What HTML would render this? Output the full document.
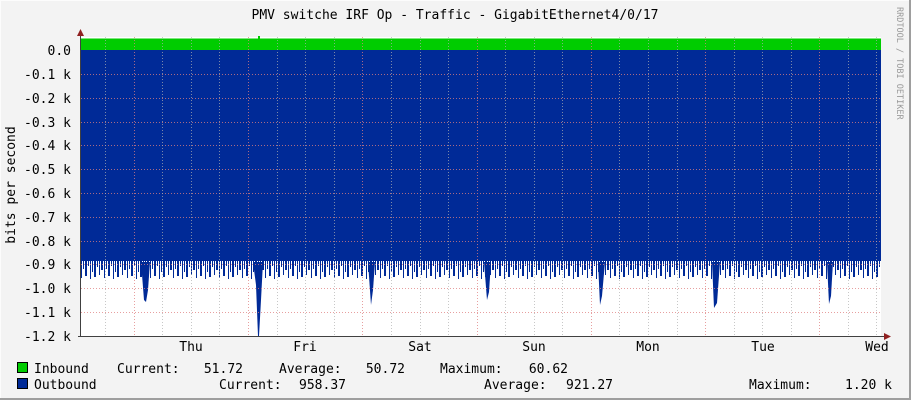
<!DOCTYPE html>
<html><head><meta charset="utf-8"><style>
html,body{margin:0;padding:0;background:#f3f3f3;}
svg{display:block;}
text{font-family:"DejaVu Sans Mono","Liberation Mono",monospace;font-size:13px;fill:#000;}
</style></head><body>
<svg width="911" height="400" viewBox="0 0 911 400" xmlns="http://www.w3.org/2000/svg">
<defs>
<pattern id="sp" patternUnits="userSpaceOnUse" x="81" y="258" width="23" height="30">
<rect x="0" y="0" width="23" height="3" fill="#002a97"/>
<rect x="0" y="0" width="1" height="20" fill="#002a97"/>
<rect x="2" y="0" width="1" height="11" fill="#002a97"/>
<rect x="4" y="0" width="2" height="18" fill="#002a97"/>
<rect x="7" y="0" width="1" height="8" fill="#002a97"/>
<rect x="9" y="0" width="1" height="21" fill="#002a97"/>
<rect x="11" y="0" width="1" height="14" fill="#002a97"/>
<rect x="13" y="0" width="2" height="19" fill="#002a97"/>
<rect x="16" y="0" width="1" height="9" fill="#002a97"/>
<rect x="18" y="0" width="1" height="17" fill="#002a97"/>
<rect x="20" y="0" width="2" height="12" fill="#002a97"/>
</pattern>
</defs>
<rect x="0" y="0" width="911" height="400" fill="#f3f3f3"/>
<rect x="0" y="0" width="911" height="1" fill="#fcfcfc"/>
<rect x="0" y="0" width="1" height="400" fill="#fcfcfc"/>
<rect x="909" y="0" width="2" height="400" fill="#9e9e9e"/>
<rect x="0" y="398" width="911" height="2" fill="#9e9e9e"/>
<text x="455" y="19" text-anchor="middle">PMV switche IRF Op - Traffic - GigabitEthernet4/0/17</text>
<rect x="81" y="37" width="800" height="299" fill="#fff"/>
<rect x="81" y="39" width="800" height="11" fill="#00cc00"/>
<rect x="81" y="38" width="800" height="1" fill="#00cc00" opacity="0.5"/>
<rect x="258" y="36" width="2" height="3" fill="#00cc00"/>
<rect x="81" y="50" width="800" height="208" fill="#002a97"/>
<rect x="81" y="258" width="800" height="22" fill="url(#sp)"/>
<g fill="#002a97">
<polygon points="141,262 144,300 146,302 148,290 150,262"/>
<polygon points="253,262 256,285 258,336 259,336 261,300 263,262"/>
<polygon points="368,262 371,305 373,290 375,262"/>
<polygon points="484,262 487,300 489,292 491,262"/>
<polygon points="598,262 600,305 602,296 605,262"/>
<polygon points="712,262 714,308 717,303 720,262"/>
<polygon points="827,262 829,304 831,296 833,262"/>
</g>
<g stroke-width="1" stroke-dasharray="1,2">
<g stroke="#e08080" opacity="0.75">
<line x1="81" y1="74.5" x2="881" y2="74.5"/><line x1="81" y1="98.5" x2="881" y2="98.5"/>
<line x1="81" y1="122.5" x2="881" y2="122.5"/><line x1="81" y1="145.5" x2="881" y2="145.5"/>
<line x1="81" y1="169.5" x2="881" y2="169.5"/><line x1="81" y1="193.5" x2="881" y2="193.5"/>
<line x1="81" y1="217.5" x2="881" y2="217.5"/><line x1="81" y1="241.5" x2="881" y2="241.5"/>
<line x1="81" y1="264.5" x2="881" y2="264.5"/><line x1="81" y1="288.5" x2="881" y2="288.5"/>
<line x1="81" y1="312.5" x2="881" y2="312.5"/>
<line x1="134.5" y1="37" x2="134.5" y2="336"/><line x1="248.5" y1="37" x2="248.5" y2="336"/>
<line x1="362.5" y1="37" x2="362.5" y2="336"/><line x1="477.5" y1="37" x2="477.5" y2="336"/>
<line x1="591.5" y1="37" x2="591.5" y2="336"/><line x1="705.5" y1="37" x2="705.5" y2="336"/>
<line x1="819.5" y1="37" x2="819.5" y2="336"/>
</g>
<g stroke="#b0b0b0" opacity="0.7">
<line x1="105.5" y1="37" x2="105.5" y2="336"/><line x1="162.5" y1="37" x2="162.5" y2="336"/>
<line x1="191.5" y1="37" x2="191.5" y2="336"/><line x1="219.5" y1="37" x2="219.5" y2="336"/>
<line x1="277.5" y1="37" x2="277.5" y2="336"/><line x1="305.5" y1="37" x2="305.5" y2="336"/>
<line x1="334.5" y1="37" x2="334.5" y2="336"/><line x1="391.5" y1="37" x2="391.5" y2="336"/>
<line x1="420.5" y1="37" x2="420.5" y2="336"/><line x1="448.5" y1="37" x2="448.5" y2="336"/>
<line x1="505.5" y1="37" x2="505.5" y2="336"/><line x1="534.5" y1="37" x2="534.5" y2="336"/>
<line x1="562.5" y1="37" x2="562.5" y2="336"/><line x1="619.5" y1="37" x2="619.5" y2="336"/>
<line x1="648.5" y1="37" x2="648.5" y2="336"/><line x1="677.5" y1="37" x2="677.5" y2="336"/>
<line x1="734.5" y1="37" x2="734.5" y2="336"/><line x1="762.5" y1="37" x2="762.5" y2="336"/>
<line x1="791.5" y1="37" x2="791.5" y2="336"/><line x1="848.5" y1="37" x2="848.5" y2="336"/>
<line x1="876.5" y1="37" x2="876.5" y2="336"/>
</g>
</g>
<line x1="80.5" y1="34" x2="80.5" y2="337" stroke="#404040"/>
<line x1="78" y1="336.5" x2="886" y2="336.5" stroke="#404040"/>
<polygon points="77,36 84,36 80.5,29" fill="#902020"/>
<polygon points="884,333 884,340 891,336.5" fill="#902020"/>
<g text-anchor="end">
<text x="71" y="55">0.0</text><text x="71" y="79">-0.1 k</text><text x="71" y="103">-0.2 k</text>
<text x="71" y="127">-0.3 k</text><text x="71" y="150">-0.4 k</text><text x="71" y="174">-0.5 k</text>
<text x="71" y="198">-0.6 k</text><text x="71" y="222">-0.7 k</text><text x="71" y="246">-0.8 k</text>
<text x="71" y="269">-0.9 k</text><text x="71" y="293">-1.0 k</text><text x="71" y="317">-1.1 k</text>
<text x="71" y="341">-1.2 k</text>
</g>
<text transform="translate(15,185) rotate(-90)" text-anchor="middle">bits per second</text>
<g text-anchor="middle">
<text x="191" y="351">Thu</text><text x="305" y="351">Fri</text><text x="420" y="351">Sat</text>
<text x="534" y="351">Sun</text><text x="648" y="351">Mon</text><text x="763" y="351">Tue</text>
<text x="877" y="351">Wed</text>
</g>
<text transform="translate(897,7) rotate(90)" style="font-size:8.5px;fill:#999">RRDTOOL / TOBI OETIKER</text>
<rect x="17.5" y="362.5" width="10" height="10" fill="#00cc00" stroke="#000"/>
<rect x="17.5" y="378.5" width="10" height="10" fill="#002a97" stroke="#000"/>
<text x="34" y="373">Inbound</text>
<text x="117" y="373">Current:</text><text x="243" y="373" text-anchor="end">51.72</text>
<text x="279" y="373">Average:</text><text x="405" y="373" text-anchor="end">50.72</text>
<text x="440" y="373">Maximum:</text><text x="568" y="373" text-anchor="end">60.62</text>
<text x="34" y="389">Outbound</text>
<text x="219" y="389">Current:</text><text x="346" y="389" text-anchor="end">958.37</text>
<text x="484" y="389">Average:</text><text x="613" y="389" text-anchor="end">921.27</text>
<text x="749" y="389">Maximum:</text><text x="892" y="389" text-anchor="end">1.20 k</text>
</svg>
</body></html>
